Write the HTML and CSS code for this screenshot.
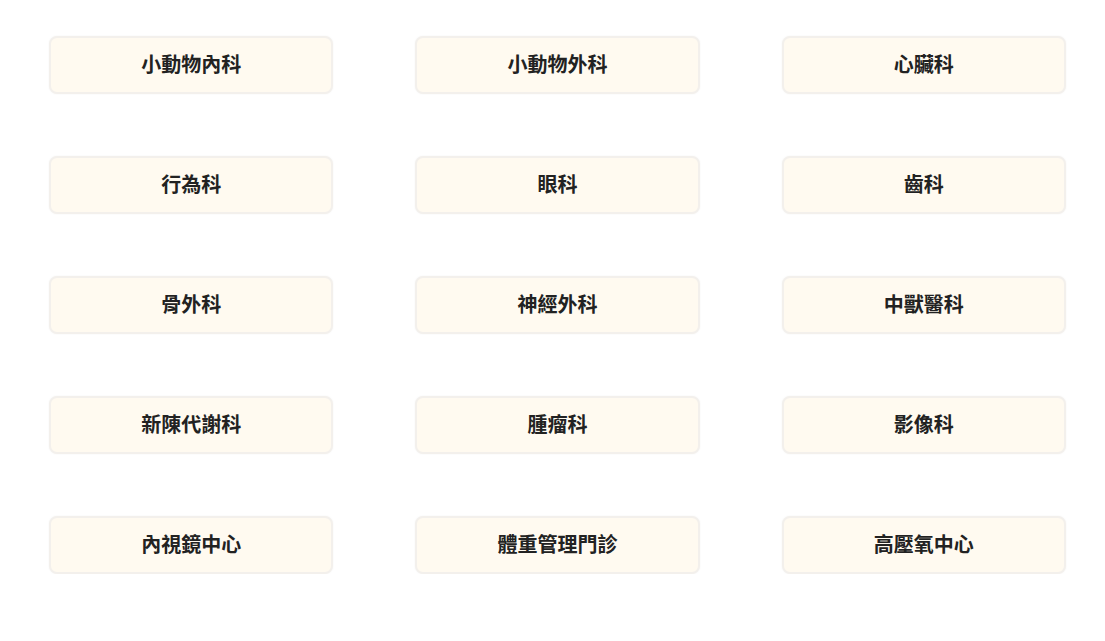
FILE: index.html
```html
<!DOCTYPE html>
<html lang="zh-Hant">
<head>
<meta charset="utf-8">
<link rel="stylesheet" href="styles.css">
</head>
<body>
<div class="grid">
  <div class="dept">小動物內科</div>
  <div class="dept">小動物外科</div>
  <div class="dept">心臟科</div>
  <div class="dept">行為科</div>
  <div class="dept">眼科</div>
  <div class="dept">齒科</div>
  <div class="dept">骨外科</div>
  <div class="dept">神經外科</div>
  <div class="dept">中獸醫科</div>
  <div class="dept">新陳代謝科</div>
  <div class="dept">腫瘤科</div>
  <div class="dept">影像科</div>
  <div class="dept">內視鏡中心</div>
  <div class="dept">體重管理門診</div>
  <div class="dept">高壓氧中心</div>
</div>
</body>
</html>
```
FILE: styles.css
```css
html, body {
  margin: 0;
  background: #ffffff;
}
body {
  font-family: "Noto Sans CJK TC", "Noto Sans", sans-serif;
}
.grid {
  display: grid;
  grid-template-columns: repeat(3, 1fr);
  column-gap: 82px;
  row-gap: 62px;
  padding: 36px 39px 0 49px;
}
.dept {
  box-sizing: border-box;
  height: 58px;
  padding-bottom: 3px;
  display: flex;
  align-items: center;
  justify-content: center;
  background: #fffaf0;
  border: 2px solid #f3f0ec;
  border-radius: 8px;
  box-shadow: 0 0 2px rgba(0,0,0,0.05);
  font-size: 20px;
  font-weight: 700;
  color: #222222;
}
```
